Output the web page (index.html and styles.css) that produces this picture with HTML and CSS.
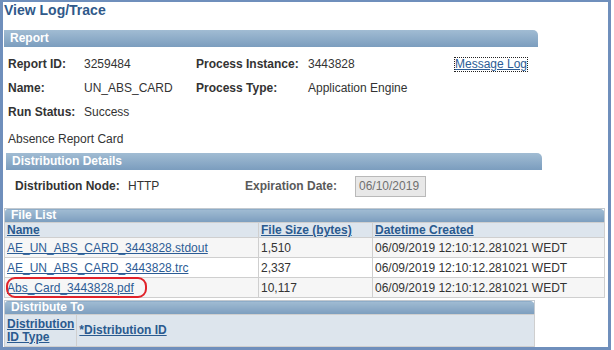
FILE: index.html
```html
<!DOCTYPE html>
<html lang="en">
<head>
  <meta charset="UTF-8">
  <title>View Log/Trace</title>
  <link rel="stylesheet" href="styles.css">
</head>
<body>
  <div class="frame">
    <h1 class="title">View Log/Trace</h1>

    <div class="bar bar-report">Report</div>
    <div class="report-grid">
      <span class="label">Report ID:</span>
      <span class="value">3259484</span>
      <span class="label">Process Instance:</span>
      <span class="value">3443828</span>
      <a class="msg-link" href="#">Message Log</a>

      <span class="label">Name:</span>
      <span class="value">UN_ABS_CARD</span>
      <span class="label">Process Type:</span>
      <span class="value">Application Engine</span>
      <span></span>

      <span class="label">Run Status:</span>
      <span class="value">Success</span>
      <span></span><span></span><span></span>
    </div>
    <p class="description">Absence Report Card</p>

    <div class="bar bar-dist">Distribution Details</div>
    <div class="dist-row">
      <span class="label">Distribution Node:</span>
      <span class="value">HTTP</span>
      <span class="label muted">Expiration Date:</span>
      <span class="date-box">06/10/2019</span>
    </div>

    <table class="grid file-list">
      <tr><th colspan="3" class="grid-bar">File List</th></tr>
      <tr class="head">
        <td class="col-name"><a href="#">Name</a></td>
        <td class="col-size"><a href="#">File Size (bytes)</a></td>
        <td><a href="#">Datetime Created</a></td>
      </tr>
      <tr class="odd">
        <td><a class="file" href="#">AE_UN_ABS_CARD_3443828.stdout</a></td>
        <td>1,510</td>
        <td>06/09/2019 12:10:12.281021 WEDT</td>
      </tr>
      <tr>
        <td><a class="file" href="#">AE_UN_ABS_CARD_3443828.trc</a></td>
        <td>2,337</td>
        <td>06/09/2019 12:10:12.281021 WEDT</td>
      </tr>
      <tr class="odd">
        <td class="marked"><a class="file" href="#">Abs_Card_3443828.pdf</a><span class="ring"></span></td>
        <td>10,117</td>
        <td>06/09/2019 12:10:12.281021 WEDT</td>
      </tr>
    </table>

    <table class="grid dist-to">
      <tr><th colspan="2" class="grid-bar">Distribute To</th></tr>
      <tr class="head tall">
        <td class="col-type"><a href="#">Distribution<br>ID Type</a></td>
        <td><a href="#">*Distribution ID</a></td>
      </tr>
      <tr class="empty"><td></td><td></td></tr>
    </table>
  </div>
</body>
</html>
```

FILE: styles.css
```css
body {
  margin: 0;
  font-family: "Liberation Sans", Arial, sans-serif;
  font-size: 12px;
  color: #333;
  background: #fff;
}
.frame {
  width: 605px;
  height: 345px;
  border: 3px solid #6f8fbc;
  border-top-width: 2px;
  overflow: hidden;
  background: #fff;
}
.title {
  margin: 0 0 11px 1px;
  font-size: 14px;
  line-height: 17px;
  font-weight: bold;
  color: #30598a;
}
.bar {
  margin-left: 1px;
  height: 17px;
  line-height: 17px;
  padding-left: 6px;
  color: #fff;
  font-weight: bold;
  background: linear-gradient(#a1bcd3, #7b9dbe);
  border-radius: 0 5px 0 0;
}
.bar-report {
  width: 528px;
}
.bar-dist {
  margin-left: 3px;
  width: 530px;
  margin-top: 5px;
}
.label {
  font-weight: bold;
  color: #333;
}
.muted {
  color: #5a5a5a;
}
.value {
  color: #333;
}
.report-grid {
  display: grid;
  grid-template-columns: 76px 112px 112px 147px auto;
  grid-auto-rows: 24px;
  align-items: center;
  padding-left: 5px;
  margin-top: 5px;
}
.msg-link {
  justify-self: start;
  color: #2c5c95;
  text-decoration: underline;
  outline: 1px dotted #222;
  line-height: 13px;
}
.description {
  margin: 6px 0 0 5px;
  line-height: 18px;
}
.dist-row {
  display: grid;
  grid-template-columns: 113px 117px 110px auto;
  align-items: center;
  height: 24px;
  margin-top: 4px;
  padding-left: 12px;
}
.date-box {
  justify-self: start;
  width: 66px;
  height: 19px;
  line-height: 19px;
  padding-left: 3px;
  border: 1px solid #b9b9b9;
  background: #e8e8e8;
  color: #707070;
}
.grid {
  border-collapse: collapse;
  margin-left: 1px;
  border: 1px solid #c2c9d0;
}
.grid td {
  border: 1px solid #cfcfcf;
  padding: 0 2px;
  white-space: nowrap;
}
.grid-bar {
  height: 13px;
  padding: 0 0 0 6px;
  text-align: left;
  font-weight: bold;
  line-height: 13px;
  color: #fff;
  background: linear-gradient(#a1bcd3, #7b9dbe);
  border-radius: 3px 5px 0 0;
}
.file-list {
  width: 601px;
  margin-top: 10px;
}
.file-list td {
  height: 19px;
  line-height: 14px;
}
.file-list .head td {
  height: 14px;
  line-height: 14px;
}
.head td {
  background: #dde5ed;
  vertical-align: middle;
}
.head a {
  color: #2a5a8f;
  font-weight: bold;
  text-decoration: underline;
}
.col-name {
  width: 249px;
}
.col-size {
  width: 109px;
}
.odd td {
  background: #f6f6f6;
}
.file {
  color: #2c5c95;
  text-decoration: underline;
}
.marked {
  position: relative;
}
.ring {
  position: absolute;
  left: 1px;
  top: -1px;
  width: 137px;
  height: 17px;
  border: 2px solid #e1232a;
  border-radius: 9px;
}
.dist-to {
  width: 531px;
  margin-top: 2px;
}
.tall td {
  height: 31px;
  line-height: 13px;
}
.col-type {
  width: 65px;
}
.empty td {
  height: 6px;
  background: #fff;
}
```
